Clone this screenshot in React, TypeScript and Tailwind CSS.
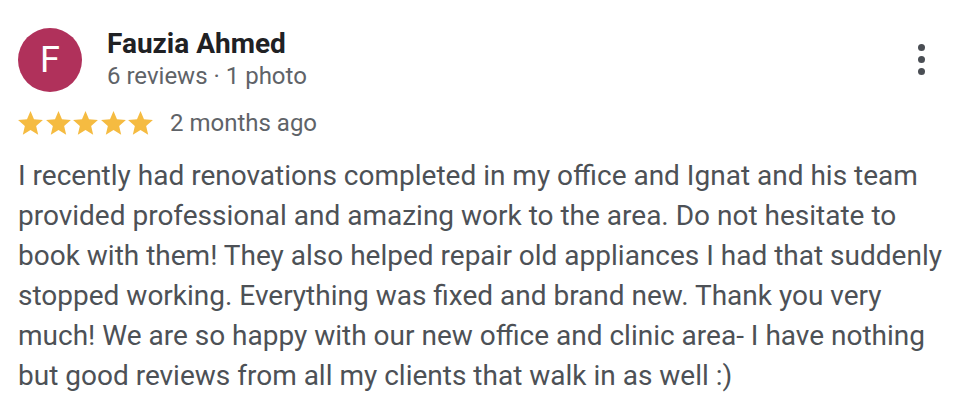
const Star = () => (
  <svg viewBox="2 2 20 19.3" className="h-[24px] w-[25px] fill-[#f5bb41]">
    <path d="M12 17.27 18.18 21l-1.64-7.03L22 9.24l-7.19-.61L12 2 9.19 8.63 2 9.24l5.46 4.73L5.82 21z" />
  </svg>
);

const App = () => {
  return (
    <div className="h-[420px] w-[968px] bg-white font-['Roboto',sans-serif]">
      <div className="flex items-start pl-[18px] pr-[43px] pt-[28px]">
        <div className="flex h-[64px] w-[64px] shrink-0 items-center justify-center rounded-full bg-[#b0315b] text-[36px] text-white">
          F
        </div>
        <div className="ml-[25px] flex-1">
          <div className="text-[28px] font-bold leading-[32px] text-[#202124]">
            Fauzia Ahmed
          </div>
          <div className="mt-[1px] text-[24px] leading-[30px] text-[#5f6368]">
            6 reviews · 1 photo
          </div>
        </div>
        <div className="mt-[16px] flex flex-col gap-[5px]">
          <span className="h-[7px] w-[7px] rounded-full bg-[#4a4e54]" />
          <span className="h-[7px] w-[7px] rounded-full bg-[#4a4e54]" />
          <span className="h-[7px] w-[7px] rounded-full bg-[#4a4e54]" />
        </div>
      </div>
      <div className="mt-[17px] flex items-center pl-[18px]">
        <div className="flex gap-[2.5px]">
          <Star />
          <Star />
          <Star />
          <Star />
          <Star />
        </div>
        <span className="ml-[17px] text-[24px] leading-[28px] text-[#5f6368]">2 months ago</span>
      </div>
      <p className="mt-[19px] pl-[18px] pr-[18px] text-[28px] leading-[40px] text-[#4d5156]">
        I recently had renovations completed in my office and Ignat and his team provided
        professional and amazing work to the area. Do not hesitate to book with them! They also
        helped repair old appliances I had that suddenly stopped working. Everything was fixed and
        brand new. Thank you very much! We are so happy with our new office and clinic area- I have
        nothing but good reviews from all my clients that walk in as well :)
      </p>
    </div>
  );
};

export default App;
